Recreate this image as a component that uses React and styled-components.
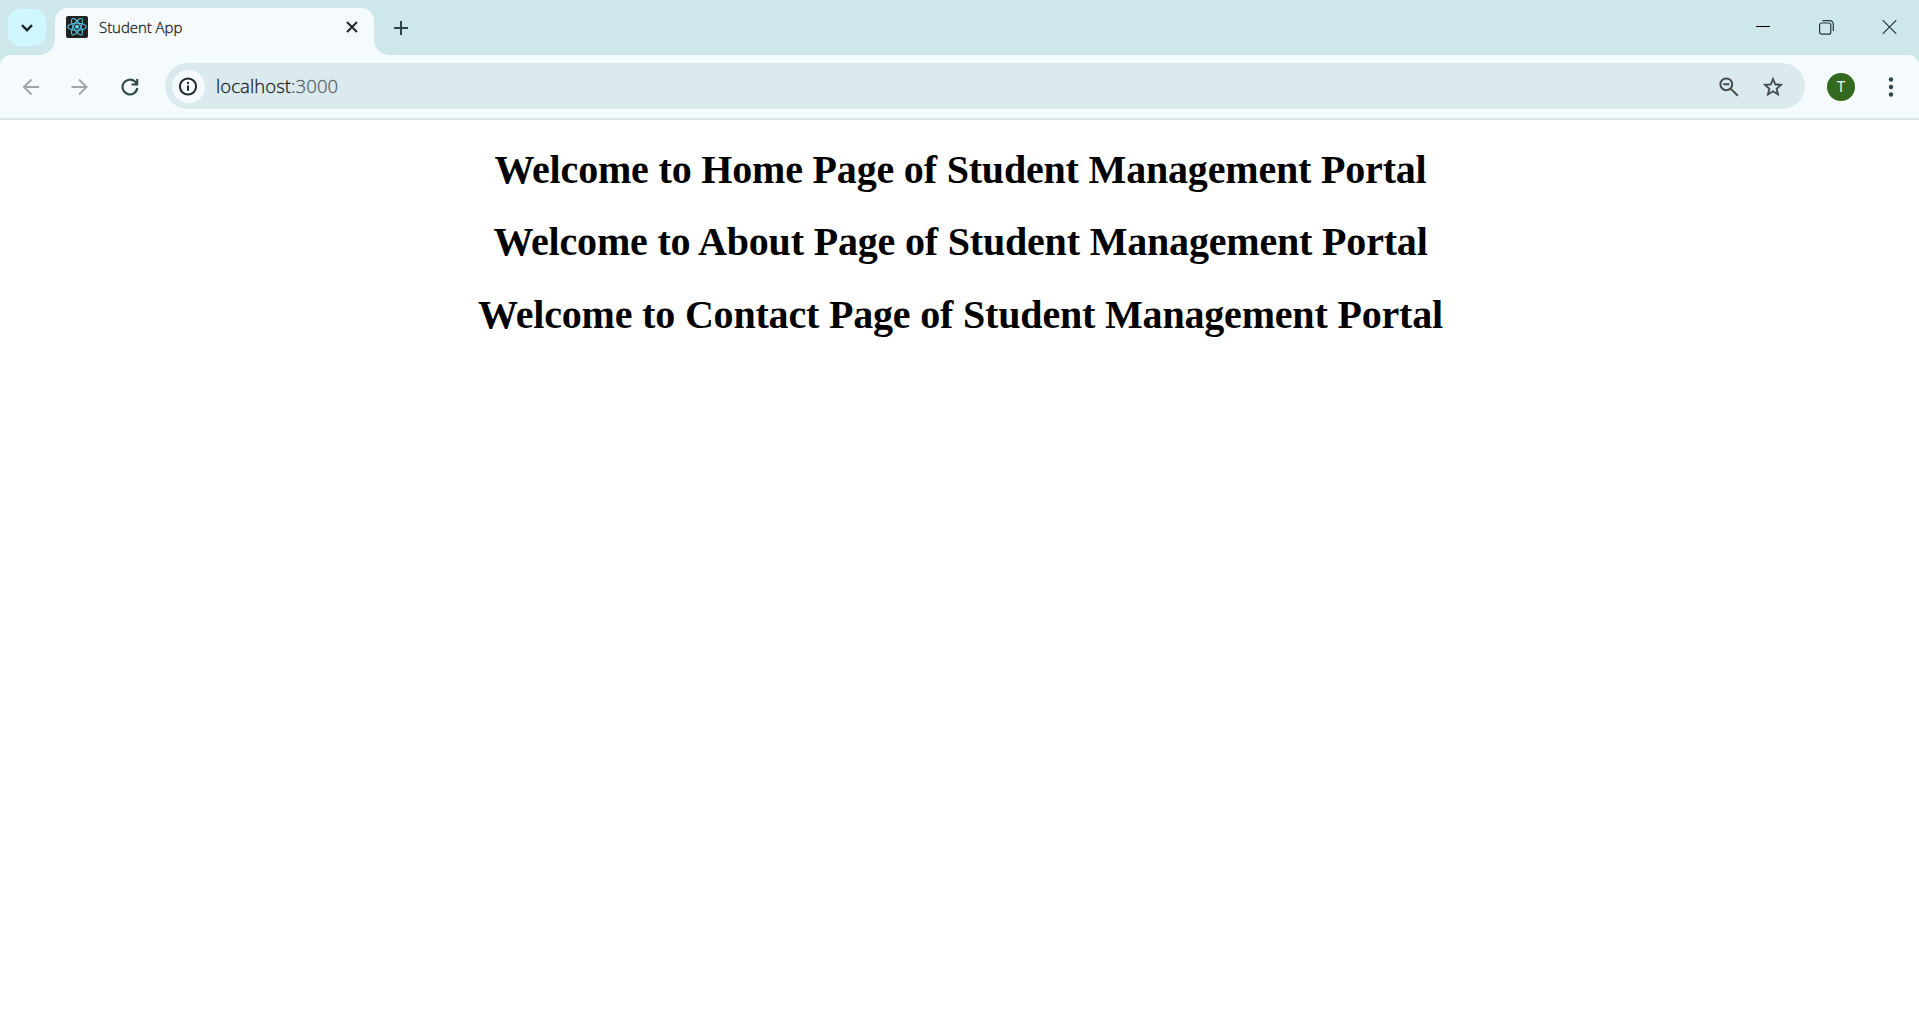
import React from 'react';
import styled, { createGlobalStyle } from 'styled-components';

const strip = '#cee7eb';
const surface = '#f5fafd';

const GlobalStyle = createGlobalStyle`
  * { box-sizing: border-box; }
  body { margin: 0; background: #fff; overflow: hidden; }
`;

const Browser = styled.div`
  display: flex;
  flex-direction: column;
  height: 100vh;
  font-family: 'Open Sans', 'Noto Sans', sans-serif;
`;

const TabStrip = styled.header`
  display: flex;
  align-items: flex-start;
  height: 55px;
  padding: 8px 0 0 8px;
  background: ${strip};
`;

const IconButton = styled.button`
  display: flex;
  align-items: center;
  justify-content: center;
  flex: none;
  width: ${(p) => p.$w}px;
  height: ${(p) => p.$h || p.$w}px;
  padding: 0;
  border: 0;
  background: ${(p) => p.$bg || 'transparent'};
  border-radius: ${(p) => p.$radius || '0'};
  color: ${(p) => p.$color || '#1f2a2d'};
`;

const SearchTabs = styled(IconButton)`
  margin: 1px 9px 0 0;
`;

const Tab = styled.div`
  position: relative;
  display: flex;
  align-items: center;
  width: 319px;
  height: 47px;
  padding: 0 11px 9px 11px;
  background: ${surface};
  border-radius: 13px 13px 0 0;

  &::before,
  &::after {
    content: '';
    position: absolute;
    bottom: 0;
    width: 16px;
    height: 16px;
  }
  &::before {
    right: 100%;
    background: radial-gradient(circle at 0 0, transparent 15.5px, ${surface} 16.5px);
  }
  &::after {
    left: 100%;
    background: radial-gradient(circle at 100% 0, transparent 15.5px, ${surface} 16.5px);
  }
`;

const TabTitle = styled.span`
  flex: 1;
  margin-left: 11px;
  font-size: 15px;
  font-weight: 300;
  -webkit-text-stroke: 0.3px currentColor;
  line-height: 20px;
  letter-spacing: -0.05px;
  color: #1b2022;
  white-space: nowrap;
`;

const NewTab = styled(IconButton)`
  margin-left: 9px;
`;

const WindowControls = styled.div`
  display: flex;
  margin-left: auto;
  margin-top: -8px;
`;

const ToolbarBack = styled.div`
  background: ${strip};
`;

const Toolbar = styled.nav`
  display: flex;
  align-items: center;
  height: 65px;
  padding: 0 9px 1px 6px;
  background: ${surface};
  border-bottom: 2px solid #dae6e8;
  border-radius: 11px 11px 0 0;
`;

const NavButtons = styled.div`
  display: flex;
  width: 159px;
  margin-top: 2px;
`;

const AddressBar = styled.div`
  display: flex;
  align-items: center;
  flex: 1;
  height: 46px;
  padding: 1px 10px 0 7px;
  background: #dbeaee;
  border-radius: 23px;
`;

const Url = styled.span`
  flex: 1;
  margin: -1px 0 0 11px;
  font-size: 18.5px;
  font-weight: 300;
  -webkit-text-stroke: 0.3px currentColor;
  line-height: 24px;
  letter-spacing: 0.08px;
  color: #1b2022;
`;

const Port = styled.span`
  color: #596062;
`;

const Profile = styled.div`
  display: flex;
  align-items: center;
  justify-content: center;
  width: 28px;
  height: 28px;
  margin: 2px 17px 0 22px;
  border-radius: 50%;
  background: #33691e;
  color: #f0f5ed;
  font: 15px/28px Roboto, sans-serif;
`;

const MenuButton = styled(IconButton)`
  margin-top: 2px;
`;

const Page = styled.main`
  flex: 1;
  background: #fff;
  padding: 0 10px 0 12px;
  display: flow-root;
`;

const Heading = styled.h1`
  margin: 26.5px 0;
  font: bold 40px/46px 'Liberation Serif', 'Times New Roman', serif;
  letter-spacing: -0.18px;
  text-align: center;
  color: #000;
`;

function Icon({ w, h = w, stroke = 2, children, ...rest }) {
  return (
    <svg
      width={w}
      height={h}
      viewBox={`0 0 ${w} ${h}`}
      fill="none"
      stroke="currentColor"
      strokeWidth={stroke}
      {...rest}
    >
      {children}
    </svg>
  );
}

function ReactLogo() {
  return (
    <svg width="22" height="22" viewBox="0 0 22 22">
      <rect width="22" height="22" rx="2" fill="#222" />
      <g fill="none" stroke="#53c1de" strokeWidth="1.05" transform="translate(11 10.7)">
        <ellipse rx="9.3" ry="3.5" />
        <ellipse rx="9.3" ry="3.5" transform="rotate(60)" />
        <ellipse rx="9.3" ry="3.5" transform="rotate(120)" />
        <circle r="1.9" fill="#61dafb" stroke="none" />
      </g>
    </svg>
  );
}

const pages = ['Home', 'About', 'Contact'];

export default function App() {
  return (
    <Browser>
      <GlobalStyle />
      <TabStrip>
        <SearchTabs $w={38} $h={37} $bg="#d1f7fe" $radius="12px" aria-label="Search tabs">
          <Icon w={14} h={10} stroke={2.4}>
            <path d="M2 2.2 7 7.2 12 2.2" />
          </Icon>
        </SearchTabs>
        <Tab>
          <ReactLogo />
          <TabTitle>Student App</TabTitle>
          <IconButton $w={22} aria-label="Close tab">
            <Icon w={12} stroke={2.1}>
              <path d="M1 1 11 11M11 1 1 11" />
            </Icon>
          </IconButton>
        </Tab>
        <NewTab $w={36} $h={40} $color="#30454a" aria-label="New tab">
          <Icon w={14} stroke={2}>
            <path d="M7 0V14M0 7H14" />
          </Icon>
        </NewTab>
        <WindowControls>
          <IconButton $w={60} $h={54} $color="#000" aria-label="Minimize">
            <Icon w={14} stroke={1}>
              <path d="M0 6.5H14" />
            </Icon>
          </IconButton>
          <IconButton $w={67} $h={54} $color="#26363a" aria-label="Restore">
            <Icon w={15} stroke={1.2}>
              <rect x="0.6" y="3" width="11.2" height="11.2" rx="2" />
              <path d="M3.4 .7H10.4Q14.3 .7 14.3 4.6V11" />
            </Icon>
          </IconButton>
          <IconButton $w={59} $h={54} $color="#26363a" aria-label="Close">
            <Icon w={15} h={14} stroke={1.2}>
              <path d="M.7 .2 14.3 13.8M14.3 .2 .7 13.8" />
            </Icon>
          </IconButton>
        </WindowControls>
      </TabStrip>
      <ToolbarBack>
        <Toolbar>
          <NavButtons>
            <IconButton $w={50} $h={46} $color="#9fa7a9" aria-label="Back">
              <Icon w={18}>
                <path d="M17 9H2M9.5 1.5 2 9 9.5 16.5" />
              </Icon>
            </IconButton>
            <IconButton $w={47} $h={46} $color="#9fa7a9" aria-label="Forward">
              <Icon w={18}>
                <path d="M.5 9H15.5M8 1.5 15.5 9 8 16.5" />
              </Icon>
            </IconButton>
            <IconButton $w={53} $h={46} $color="#30474c" aria-label="Reload">
              <Icon w={18} stroke={2.1}>
                <path d="M16.3 10A7.4 7.4 0 1 1 14.2 3.8L15.6 5.4M16.2 1V6.5H10.5" />
              </Icon>
            </IconButton>
          </NavButtons>
          <AddressBar>
            <IconButton $w={33} $bg={surface} $radius="50%" aria-label="Site information">
              <Icon w={19} stroke={2}>
                <circle cx="9" cy="9.5" r="8.1" />
                <path d="M9 8.4V13.8M9 5V7" />
              </Icon>
            </IconButton>
            <Url>
              localhost<Port>:3000</Port>
            </Url>
            <IconButton $w={44} $color="#454a4c" aria-label="Zoom">
              <Icon w={20} stroke={2}>
                <circle cx="7.3" cy="7.3" r="5.9" />
                <path d="M11.6 11.6 18.8 18.8M4.3 7.3H10.3" />
              </Icon>
            </IconButton>
            <IconButton $w={44} $color="#454a4c" aria-label="Bookmark">
              <Icon w={24} stroke={0.3} fill="currentColor">
                <path d="M22 9.24l-7.19-.62L12 2 9.19 8.63 2 9.24l5.46 4.73L5.82 21 12 17.27 18.18 21l-1.63-7.03L22 9.24zM12 15.4l-3.76 2.27 1-4.28-3.32-2.88 4.38-.38L12 6.1l1.71 4.04 4.38.38-3.32 2.88 1 4.28L12 15.4z" />
              </Icon>
            </IconButton>
          </AddressBar>
          <Profile>T</Profile>
          <MenuButton $w={38} $color="#30474c" aria-label="Menu">
            <Icon w={6} h={20} stroke={0}>
              <g fill="currentColor">
                <circle cx="3" cy="2.5" r="2.2" />
                <circle cx="3" cy="10" r="2.2" />
                <circle cx="3" cy="17.5" r="2.2" />
              </g>
            </Icon>
          </MenuButton>
        </Toolbar>
      </ToolbarBack>
      <Page>
        {pages.map((name) => (
          <Heading key={name}>Welcome to {name} Page of Student Management Portal</Heading>
        ))}
      </Page>
    </Browser>
  );
}
